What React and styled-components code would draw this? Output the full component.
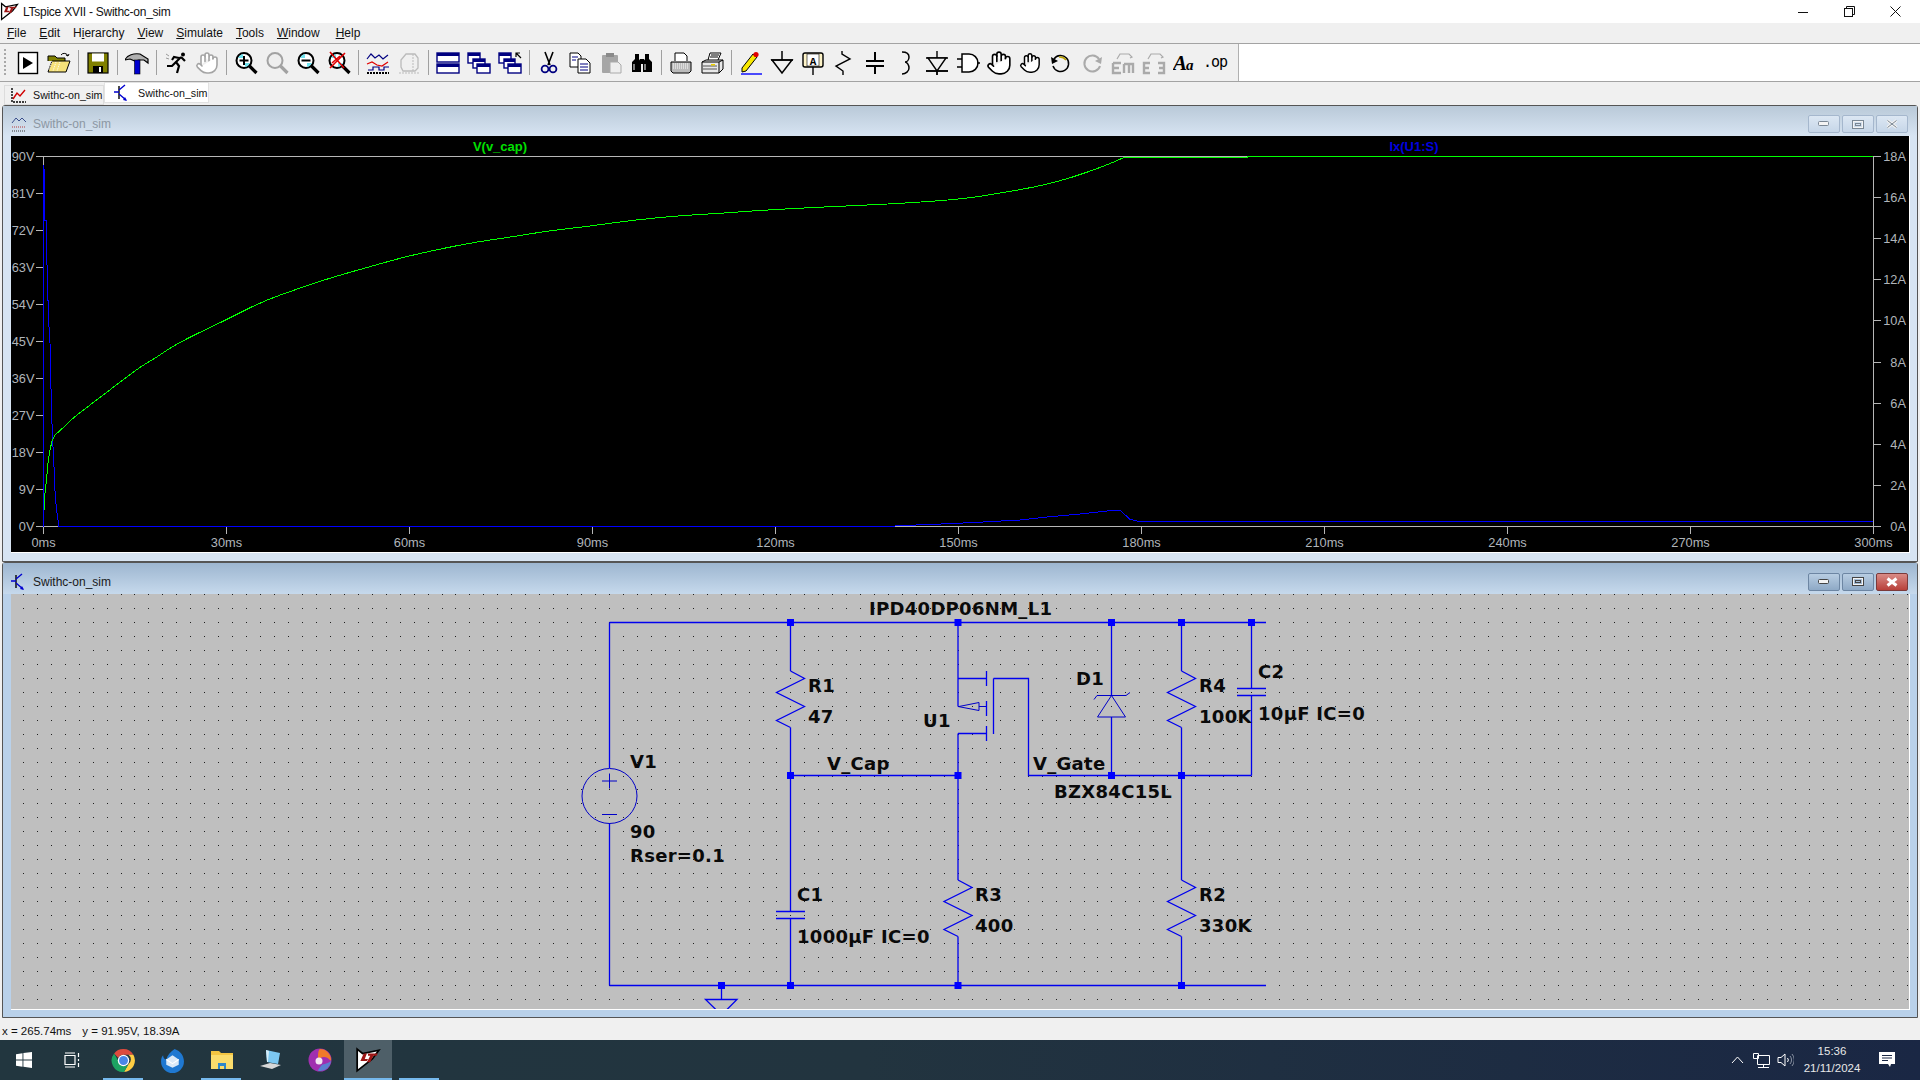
import React from "react";
import styled, { createGlobalStyle } from "styled-components";
import { Hand } from "lucide-react";

const menus = [
  ["F", "ile"],
  ["E", "dit"],
  ["H", "", "i", "erarchy"],
  ["V", "iew"],
  ["S", "imulate"],
  ["T", "ools"],
  ["W", "indow"],
  ["H", "elp"],
];

const greenHead = [
  [44, 510], [44.3, 500], [46.7, 477], [48.3, 460], [50, 450], [52.3, 440], [55, 435],
];

const greenBody = [
  [63, 428], [73, 418], [90, 405], [107, 392], [123, 380], [140, 367], [157, 357], [170, 348], [190, 337],
  [226, 320], [261, 302], [297, 289], [333, 277], [369, 267], [404, 257], [440, 249], [476, 242],
  [511, 237], [547, 231], [583, 227], [619, 222], [654, 218], [690, 215], [726, 213], [750, 211],
  [821, 207], [893, 204], [964, 199], [1000, 193], [1036, 187], [1071, 178], [1107, 165], [1124, 157.5],
];

const greenTail = [[1247, 157.5], [1248, 156.5], [1873, 156.5]];

const blueTrace = [
  [43.5, 526.5], [43.5, 165], [44.7, 175], [45, 220], [46.3, 220], [46.7, 253], [47.7, 290], [48.7, 322],
  [50, 343], [50.7, 375], [51.7, 417], [52.7, 440], [54, 467], [55.3, 498], [57, 513], [59, 526.5],
  [895, 526], [927, 524.5], [950, 523.7], [983, 522], [1020, 520], [1047, 517], [1080, 514], [1110, 510.7],
  [1120, 510.3], [1130, 519.3], [1137, 521], [1873, 521.3],
];

const toPoints = (list) => list.map((p) => p.join(",")).join(" ");

const greenPath = () => {
  let d = "M" + greenHead.map((p) => p.join(" ")).join("L");
  greenBody.forEach((p, i) => {
    const next = greenBody[i + 1];
    if (next) {
      d += `Q${p[0]} ${p[1]} ${(p[0] + next[0]) / 2} ${(p[1] + next[1]) / 2}`;
    } else {
      d += `L${p[0]} ${p[1]}`;
    }
  });
  return d + "L" + greenTail.map((p) => p.join(" ")).join("L");
};

// grid of the schematic, same pitch as the wires
const gridDots = () => {
  const pitch = 13.957;
  let d = "";
  for (let r = -2; r < 29; r++) {
    for (let c = -43; c < 94; c++) {
      const x = Math.floor(609.5 + c * pitch);
      const y = Math.floor(622.5 + r * pitch);
      d += `M${x} ${y}h1v1h-1z`;
    }
  }
  return d;
};

const resistor = (x, y) =>
  `M${x} ${y}l14 7.5l-28 14l28 14l-28 14l14 7`;

const GlobalStyle = createGlobalStyle`
  html, body { margin: 0; padding: 0; background: #f0f0f0; }
  body { font-family: "Liberation Sans", Arial, sans-serif; overflow: hidden; }
`;

const Page = styled.div`
  width: 1920px;
  height: 1080px;
  display: flex;
  flex-direction: column;
  overflow: hidden;
`;

const TitleBar = styled.div`
  height: 23px;
  background: #fff;
  display: flex;
  align-items: center;
  font-size: 12px;
  letter-spacing: -0.25px;
  color: #111;
`;

const AppIcon = styled.div`
  width: 23px;
  height: 23px;
  display: flex;
  align-items: center;
`;

const CaptionGroup = styled.div`
  margin-left: auto;
  display: flex;
  padding-right: 2px;
`;

const CaptionButton = styled.div`
  width: 46px;
  height: 23px;
  display: flex;
  align-items: center;
  justify-content: center;
`;

const MenuBar = styled.div`
  height: 20px;
  background: #f0f0f0;
  border-bottom: 1px solid #a3a3a3;
  display: flex;
  align-items: center;
  gap: 13px;
  padding-left: 7px;
  font-size: 12px;
  color: #111;
  & > span:last-child {
    margin-left: 3px;
  }
`;

const ToolRow = styled.div`
  height: 37px;
  background: #fff;
  border-bottom: 1px solid #a3a3a3;
  display: flex;
`;

const Toolbar = styled.div`
  width: 1239px;
  box-sizing: border-box;
  background: #f0f0f0;
  border-right: 1px solid #b0b0b0;
  display: flex;
  align-items: center;
`;

const Grip = styled.div`
  width: 2px;
  height: 28px;
  margin: 0 6px 0 4px;
  background: repeating-linear-gradient(to bottom, #a8a8a8 0 2px, transparent 2px 4px);
`;

const ToolButton = styled.div`
  width: 31px;
  height: 30px;
  display: flex;
  align-items: center;
  justify-content: center;
  flex: none;
`;

const ToolSep = styled.div`
  width: 1px;
  height: 25px;
  margin: 0 3.5px;
  background: #a0a0a0;
  flex: none;
`;

const TabStrip = styled.div`
  height: 23px;
  background: #f0f0f0;
  display: flex;
  align-items: flex-start;
  padding-left: 4px;
  font-size: 10.7px;
  color: #111;
  white-space: nowrap;
`;

const Tab = styled.div`
  width: ${(p) => (p.$active ? "105px" : "100px")};
  height: ${(p) => (p.$active ? "21px" : "20px")};
  margin-top: ${(p) => (p.$active ? "0" : "3px")};
  box-sizing: border-box;
  background: ${(p) => (p.$active ? "#fff" : "#f0f0f0")};
  border: 1px solid ${(p) => (p.$active ? "#e2e2e2" : "#dcdcdc")};
  display: flex;
  align-items: center;
  gap: ${(p) => (p.$active ? "8px" : "6px")};
  padding-left: ${(p) => (p.$active ? "9px" : "5px")};
`;

const Mdi = styled.div`
  flex: 1;
  display: flex;
  flex-direction: column;
  padding: 0 2px;
  background: #f0f0f0;
`;

const ChildWindow = styled.div`
  height: ${(p) => (p.$active ? "456px" : "457px")};
  box-sizing: border-box;
  flex: none;
  display: flex;
  flex-direction: column;
  border: 1px solid #555;
  border-radius: 3px 3px 0 0;
  background: ${(p) => (p.$active ? "#b9d1ea" : "#d7e4f2")};
`;

const ChildHeader = styled.div`
  height: ${(p) => (p.$active ? "31px" : "30px")};
  box-sizing: border-box;
  flex: none;
  display: flex;
  align-items: center;
  gap: 6px;
  padding: 6px 9px 0 8px;
  font-size: 12px;
  color: ${(p) => (p.$active ? "#1a1a1a" : "#8c97a3")};
  background: linear-gradient(
    to bottom,
    ${(p) => (p.$active ? "#9db6d0, #c6d9ec" : "#b9c9d8, #d7e4f2")}
  );
`;

const WinButtons = styled.div`
  margin-left: auto;
  display: flex;
  gap: 2px;
`;

const WinButton = styled.div`
  width: 32px;
  height: 18px;
  box-sizing: border-box;
  border: 1px solid #9fb0c6;
  border-radius: 2px;
  display: flex;
  align-items: center;
  justify-content: center;
  background: ${(p) =>
    p.$close
      ? "linear-gradient(to bottom, #d98b86, #b8403a)"
      : p.$active
      ? "linear-gradient(to bottom, #b8cde2, #8ea9c6)"
      : "linear-gradient(to bottom, #dce7f3, #c6d6e8)"};
  border-color: ${(p) => (p.$close ? "#7b3a3a" : p.$active ? "#6d86a3" : "#a5b7cd")};
`;

const PlotFrame = styled.div`
  flex: 1;
  margin: 0 7px 8px 8px;
  border-right: 1px solid #fff;
  border-bottom: 1px solid #fff;
  background: #000;
  display: flex;
`;

const SheetFrame = styled(PlotFrame)`
  background: #bfbfbf;
  margin-bottom: 7px;
`;

const Drawing = styled.svg`
  display: block;
  width: 100%;
  height: 100%;
`;

const AxisLabel = styled.text`
  font: 12.8px "Liberation Sans", Arial, sans-serif;
  fill: #b0b5bb;
  text-anchor: ${(p) => p.$anchor || "end"};
`;

const TraceLabel = styled.text`
  font: bold 13px "Liberation Sans", Arial, sans-serif;
  fill: ${(p) => p.$color};
  text-anchor: middle;
`;

const SchLabel = styled.text`
  font: bold 18px "DejaVu Sans", Verdana, sans-serif;
  letter-spacing: 0.3px;
  fill: #0a0a0a;
`;

const StatusBar = styled.div`
  height: 18px;
  margin-top: 4px;
  background: #f0f0f0;
  display: flex;
  align-items: center;
  gap: 11px;
  padding-left: 2px;
  font-size: 11.5px;
  color: #111;
`;

const Taskbar = styled.div`
  height: 40px;
  display: flex;
  background: linear-gradient(to right, #22363f, #22343f 45%, #1a2744);
`;

const TaskTile = styled.div`
  position: relative;
  width: ${(p) => (p.$wide ? "48px" : "49px")};
  height: 40px;
  flex: none;
  display: flex;
  align-items: center;
  justify-content: center;
  background: ${(p) => (p.$current ? "#4e5f68" : "transparent")};
  &::after {
    content: "";
    display: ${(p) => (p.$running ? "block" : "none")};
    position: absolute;
    bottom: 0;
    left: ${(p) => (p.$current ? "0" : "4px")};
    right: ${(p) => (p.$current ? "0" : "5px")};
    height: 2px;
    background: #76b9ed;
  }
`;

const TaskGap = styled.div`
  width: 3px;
`;

const Tray = styled.div`
  margin-left: auto;
  display: flex;
  align-items: center;
  color: #e8e8e8;
`;

const TrayIcon = styled.div`
  width: 24px;
  display: flex;
  justify-content: center;
`;

const Clock = styled.div`
  width: 70px;
  margin-right: 9px;
  text-align: center;
  font-size: 11.5px;
  line-height: 17px;
`;

const NotifyBox = styled.div`
  width: 44px;
  padding-right: 22px;
  box-sizing: border-box;
  display: flex;
  justify-content: center;
`;

const Ico = ({ children, size = 24 }) => (
  <svg width={size} height={size} viewBox="0 0 24 24" fill="none">
    {children}
  </svg>
);

const Mag = ({ grey, children }) => {
  const c = grey ? "#a2a2a2" : "#000";
  return (
    <Ico>
      <circle cx="10" cy="9.5" r="7.5" fill={grey ? "#eee" : "#fff"} stroke={c} strokeWidth="2" />
      {!grey && <path d="M4 7a7 7 0 0 1 5-4v4zM16 12a7 7 0 0 1-5 4v-4z" fill="#6fe3ef" />}
      <path d="M15.5 15l7 7" stroke={c} strokeWidth="3.2" />
      {children}
    </Ico>
  );
};

const WindowTile = ({ x, y, w, h }) => (
  <g>
    <rect x={x} y={y} width={w} height={h} fill="#fff" stroke="#000080" strokeWidth="1.4" />
    <rect x={x} y={y} width={w} height="3" fill="#000080" />
  </g>
);

const PlotGlyph = ({ grey }) =>
  grey ? (
    <Ico>
      <path d="M4 9l5-6h9l3 4v10l-3 3H6l-2-4z" stroke="#bbb" strokeWidth="1.3" />
      <path d="M16 3v17M2 22h21" stroke="#bbb" strokeDasharray="2 1" />
    </Ico>
  ) : (
    <Ico>
      <path d="M1 8l4-5 4 4 4-3 4 4 5-4" stroke="#000080" strokeWidth="1.2" />
      <path d="M1 13l5-2 5 3 5 1 6-4" stroke="#e00000" strokeWidth="1.2" />
      <path d="M2 19h5v-3h6v3h5v-3h5" stroke="#000080" strokeWidth="1.2" />
      <path d="M1 22h22" stroke="#000" strokeDasharray="2 1" strokeWidth="2" />
    </Ico>
  );

const HandGlyph = ({ color, size = 24, weight = 2 }) => (
  <Hand size={size} color={color} fill="#fff" strokeWidth={weight} />
);

const tools = [
  <Ico key="run">
    <rect x="2.5" y="1.5" width="19" height="21" fill="#fff" stroke="#000" strokeWidth="1.4" />
    <path d="M7 6l10 6-10 6z" fill="#000" />
  </Ico>,
  <Ico key="open">
    <path d="M1 10V5h7l2 2h8v3" fill="#808000" stroke="#000" />
    <path d="M1 21l4-11h18l-4 11z" fill="#f6e27a" stroke="#000" />
    <path d="M5 10l-3 9M9 11l-3 9M13 11l-3 9" stroke="#fff" strokeDasharray="1 1" />
    <path d="M14 4a4 4 0 0 1 7 1l-2-1M21 5l1-2" stroke="#000" />
  </Ico>,
  "sep",
  <Ico key="save">
    <rect x="2" y="2" width="20" height="20" fill="#808000" stroke="#000" strokeWidth="1.2" />
    <rect x="6" y="2.5" width="12" height="8" fill="#fff" />
    <rect x="7" y="15" width="10" height="7" fill="#000" />
    <rect x="13" y="16" width="2" height="5" fill="#fff" />
  </Ico>,
  "sep",
  <Ico key="build">
    <path d="M0 9c2-5 9-7 15-6l8 5v4l-4-3h-5l-4 1-5-2z" fill="#b0b0b0" stroke="#000" strokeWidth="1.2" />
    <rect x="9.5" y="9" width="5.5" height="14" fill="#0000d0" stroke="#000" strokeWidth="0.6" />
  </Ico>,
  "sep",
  <Ico key="runner">
    <circle cx="19" cy="3.5" r="2" fill="#000" />
    <path d="M17 6l-5 5 3 4-2 7M12 11l-4 4H3M17 6l4 4M15 7l-5-1-2 3" stroke="#000" strokeWidth="2.2" />
    <path d="M2 3l3 2M2 7l3 1" stroke="#999" />
  </Ico>,
  <HandGlyph key="halt" color="#a4a4a4" weight={1.6} />,
  "sep",
  <Mag key="zin">
    <path d="M10 5v9M5.5 9.5h9" stroke="#000" strokeWidth="2" />
  </Mag>,
  <Mag key="zgrey" grey />,
  <Mag key="zout">
    <path d="M5.5 9.5h9" stroke="#000" strokeWidth="2" />
  </Mag>,
  <Mag key="zfit">
    <path d="M3 1l14 16M18 2L3 17M5 12l8-7" stroke="#e00000" strokeWidth="1.6" />
  </Mag>,
  "sep",
  <PlotGlyph key="plot" />,
  <PlotGlyph key="plotgrey" grey />,
  "sep",
  <Ico key="tile">
    <WindowTile x={1} y={2} w={22} h={9} />
    <WindowTile x={1} y={13} w={22} h={9} />
  </Ico>,
  <Ico key="cascade">
    <WindowTile x={1} y={2} w={12} h={10} />
    <WindowTile x={6} y={8} w={12} h={9} />
    <WindowTile x={10} y={13} w={13} h={9} />
  </Ico>,
  <Ico key="cascade2">
    <WindowTile x={1} y={2} w={12} h={10} />
    <WindowTile x={6} y={8} w={11} h={9} />
    <WindowTile x={10} y={13} w={13} h={9} />
    <path d="M18 6V2h4M18 2l5 5" stroke="#000" strokeWidth="1.2" />
  </Ico>,
  "sep",
  <Ico key="cut">
    <path d="M8 1l5 13M16 1l-5 13" stroke="#000" strokeWidth="1.6" />
    <circle cx="8" cy="18" r="3.4" stroke="#000080" strokeWidth="1.8" />
    <circle cx="16" cy="18" r="3.4" stroke="#000080" strokeWidth="1.8" />
  </Ico>,
  <Ico key="copy">
    <path d="M2 2h8l3 3v11H2z" fill="#fff" stroke="#000" />
    <path d="M10 8h8l4 4v10H10z" fill="#fff" stroke="#000" />
    <path d="M4 6h6M4 9h4M12 13h8M12 16h8M12 19h8" stroke="#000080" />
  </Ico>,
  <Ico key="paste">
    <rect x="3" y="4" width="16" height="18" rx="1" fill="#a6a6a6" />
    <rect x="7" y="2" width="8" height="4" fill="#8a8a8a" />
    <path d="M11 11h8l3 3v8H11z" fill="#eee" stroke="#aaa" />
  </Ico>,
  <Ico key="find">
    <path d="M5 3h4v5l2 3v10H2V11l3-3zM15 3h4v5l3 3v10h-9V11l2-3z" fill="#000" />
    <path d="M4 13v6M15 13v6" stroke="#fff" />
    <rect x="10" y="8" width="4" height="5" fill="#000" />
  </Ico>,
  "sep",
  <Ico key="print">
    <path d="M6 10V2h9l3 3v5" fill="#fff" stroke="#000" />
    <path d="M2 11h20v9l-2 2H4l-2-2z" fill="#bbb" stroke="#000" />
    <path d="M4 13h16M4 15h16M4 17h16" stroke="#fff" strokeDasharray="1 1" />
  </Ico>,
  <Ico key="print2">
    <path d="M8 9l2-7h11l-3 7" fill="#fff" stroke="#000" />
    <path d="M11 4h8M10 6h8" stroke="#000" />
    <path d="M2 11l4-2h17v9l-4 4H2z" fill="#e8e8e8" stroke="#000" />
    <path d="M2 11h17v11M19 11l4-2" stroke="#000" />
    <path d="M3 15h14M3 18h14" stroke="#555" />
    <rect x="11" y="13" width="4" height="1.5" fill="#ecd000" />
  </Ico>,
  "sep",
  <Ico key="wire">
    <path d="M3 17L14 3l4 3L7 20l-4 1z" fill="#f8e800" stroke="#000" />
    <circle cx="17" cy="3.5" r="2.6" fill="#e00000" />
    <path d="M2 23h21" stroke="#0000ff" strokeWidth="1.4" />
  </Ico>,
  <Ico key="gnd">
    <path d="M12 0v9M1 9h22" stroke="#000" strokeWidth="1.5" />
    <path d="M2 9h20L12 22z" stroke="#000" strokeWidth="1.5" />
  </Ico>,
  <Ico key="label">
    <rect x="2" y="2" width="20" height="14" rx="2" fill="#fdf3c8" stroke="#000" strokeWidth="1.4" />
    <rect x="6" y="3" width="12" height="12" fill="#fff" stroke="#000" strokeWidth="0.6" />
    <text x="12" y="13.5" textAnchor="middle" fontSize="11" fontWeight="bold" fontFamily="Liberation Mono" fill="#000">
      A
    </text>
    <path d="M12 16v8" stroke="#000" strokeWidth="1.4" />
  </Ico>,
  <Ico key="res">
    <path d="M10 0v3l8 5-14 7 7 5v4" stroke="#000" strokeWidth="1.4" />
  </Ico>,
  <Ico key="cap">
    <path d="M12 1v9M12 15v8M3 10h18M3 15h18" stroke="#000" strokeWidth="2" />
  </Ico>,
  <Ico key="ind">
    <path d="M8 1c5 0 7 2 7 5s-2 5-4 5c2 0 4 3 4 6s-3 6-7 6" stroke="#000" strokeWidth="1.5" />
  </Ico>,
  <Ico key="diode">
    <path d="M12 0v24M1 7h22M1 20h22" stroke="#000" strokeWidth="1.4" />
    <path d="M3 7h18l-9 13z" fill="#f0f0f0" stroke="#000" strokeWidth="1.4" />
    <path d="M1 20h22M12 20v4" stroke="#000" strokeWidth="1.4" />
  </Ico>,
  <Ico key="gate">
    <path d="M6 3h7a9 9 0 0 1 0 18H6z" fill="#fff" stroke="#000" strokeWidth="1.5" />
    <path d="M1 8h5M1 16h5M21 12h3" stroke="#000" strokeWidth="1.5" />
  </Ico>,
  <HandGlyph key="move" color="#000" size={26} weight={1.5} />,
  <HandGlyph key="drag" color="#000" size={22} weight={1.6} />,
  <Ico key="undo">
    <path d="M5 8a8 8 0 1 1-1 7" stroke="#000" strokeWidth="1.5" />
    <path d="M10 6a8 8 0 0 1 7 3" stroke="#b8a000" strokeWidth="1.5" />
    <path d="M2 6l1 7 6-3z" fill="#000" />
  </Ico>,
  <Ico key="redo">
    <path d="M19 8a8 8 0 1 0 1 7" stroke="#aaa" strokeWidth="2" />
    <path d="M22 6l-1 7-6-3z" fill="#aaa" />
  </Ico>,
  <Ico key="rotate">
    <path d="M2 12h8M2 12v10h8M2 17h6M13 13v9M18 13v9M13 13h9v9" stroke="#aaa" strokeWidth="2.4" />
    <path d="M6 8l3-5h9l3 3-2 1" stroke="#aaa" strokeWidth="1.2" />
  </Ico>,
  <Ico key="mirror">
    <path d="M8 12H2v10h6M2 17h5M16 12h6v10h-6M22 17h-5" stroke="#aaa" strokeWidth="2.4" />
    <path d="M6 8l3-5h9l3 3-2 1" stroke="#aaa" strokeWidth="1.2" />
  </Ico>,
  <Ico key="text">
    <text x="0" y="19" fontFamily="Liberation Serif" fontStyle="italic" fontWeight="bold" fontSize="21" fill="#000">
      A
    </text>
    <text x="13" y="19" fontFamily="Liberation Serif" fontStyle="italic" fontWeight="bold" fontSize="15" fill="#000">
      a
    </text>
  </Ico>,
  <Ico key="op">
    <text x="-1" y="16" fontFamily="DejaVu Sans Mono" fontSize="15" letterSpacing="-1" fill="#000">
      .op
    </text>
  </Ico>,
];

const LtLogo = ({ size = 18 }) => (
  <svg width={size} height={size} viewBox="0 0 24 24" fill="none">
    <path d="M2 2l5 4 15-3-6 8-14 11z" fill="#fff" stroke="#000" strokeWidth="1.6" />
    <path d="M5 13l3-7h3l-2 5h3l-1 2zM12 6h9l-1 2h-3l-3 6h-3l3-6h-2z" fill="#9c1616" />
  </svg>
);

const ScopeGlyph = () => (
  <svg width="16" height="16" viewBox="0 0 16 16" fill="none">
    <path d="M1 7l4-5 3 3 3-3 4 4" stroke="#3b4f8c" />
    <path d="M1 11h14" stroke="#b43b3b" strokeDasharray="1 1" />
    <path d="M1 15h14" stroke="#333" strokeDasharray="1 1" />
  </svg>
);

const PlotTabGlyph = () => (
  <svg width="17" height="17" viewBox="0 0 17 17" fill="none">
    <path d="M2 1v14h14" stroke="#000" strokeDasharray="2 1" strokeWidth="1.4" />
    <path d="M3 12l4-6 3 3 5-6" stroke="#d00000" strokeWidth="1.4" />
  </svg>
);

const TransistorGlyph = () => (
  <svg width="16" height="18" viewBox="0 0 16 18" fill="none">
    <path d="M5 2v13" stroke="#000" strokeWidth="1.4" />
    <path d="M11 1L5 6M0 8h5M5 10l7 6" stroke="#0000d0" strokeWidth="1.4" />
    <path d="M13 17l-4-1 2-3z" fill="#0000d0" />
  </svg>
);

const MinGlyph = ({ active }) => (
  <svg width="12" height="6">
    <rect x="0.5" y="0.5" width="10" height="4" rx="1" fill="#f4f4f4" stroke={active ? "#444" : "#7a8794"} />
  </svg>
);

const MaxGlyph = ({ active }) => (
  <svg width="12" height="9">
    <rect x="1" y="1" width="10" height="7" fill="none" stroke="#f4f4f4" strokeWidth="2" />
    <rect x="0.5" y="0.5" width="11" height="8" fill="none" stroke={active ? "#444" : "#7a8794"} />
    <rect x="3.5" y="3.5" width="5" height="2" fill="none" stroke={active ? "#444" : "#7a8794"} />
  </svg>
);

const CloseGlyph = ({ active }) => (
  <svg width="12" height="10">
    <path d="M1.5 1.5l9 7M10.5 1.5l-9 7" stroke={active ? "#fff" : "#f0f0f0"} strokeWidth="3" />
    {!active && <path d="M1.5 1.5l9 7M10.5 1.5l-9 7" stroke="#7a8794" strokeWidth="1" />}
  </svg>
);

const ChildControls = ({ active }) => (
  <WinButtons>
    <WinButton $active={active}>
      <MinGlyph active={active} />
    </WinButton>
    <WinButton $active={active}>
      <MaxGlyph active={active} />
    </WinButton>
    <WinButton $active={active} $close={active}>
      <CloseGlyph active={active} />
    </WinButton>
  </WinButtons>
);

function PlotPane() {
  const volts = Array.from({ length: 11 }, (_, i) => 90 - i * 9);
  const amps = Array.from({ length: 10 }, (_, i) => 18 - i * 2);
  const times = Array.from({ length: 11 }, (_, i) => i * 30);
  return (
    <Drawing viewBox="11 136 1898 416" preserveAspectRatio="none">
      <g stroke="#b6b6b6" fill="none" shapeRendering="crispEdges">
        <rect x="43.5" y="156.5" width="1830" height="370" />
        {volts.map((v, i) => (
          <path key={v} d={`M36 ${Math.floor(156.5 + i * 37) + 0.5}h7`} />
        ))}
        {amps.map((a, i) => (
          <path key={a} d={`M1874 ${Math.floor(156.5 + i * 41.11) + 0.5}h7`} />
        ))}
        {times.map((t, i) => (
          <path key={t} d={`M${43.5 + i * 183} 527v7`} />
        ))}
      </g>
      {volts.map((v, i) => (
        <AxisLabel key={v} x="34.5" y={161 + i * 37}>
          {v}V
        </AxisLabel>
      ))}
      {amps.map((a, i) => (
        <AxisLabel key={a} x="1906" y={161 + i * 41.11}>
          {a}A
        </AxisLabel>
      ))}
      {times.map((t, i) => (
        <AxisLabel key={t} $anchor="middle" x={43.5 + i * 183} y="546.5">
          {t}ms
        </AxisLabel>
      ))}
      <TraceLabel $color="#00e000" x="500" y="150.5">
        V(v_cap)
      </TraceLabel>
      <TraceLabel $color="#0000e0" x="1414" y="150.5">
        Ix(U1:S)
      </TraceLabel>
      <polyline points={toPoints(blueTrace)} stroke="#0000ff" strokeWidth="1" fill="none" shapeRendering="crispEdges" />
      <path d={greenPath()} stroke="#00ff00" strokeWidth="1" fill="none" shapeRendering="crispEdges" />
    </Drawing>
  );
}

const junctions = [
  [790.5, 622.5], [958, 622.5], [1111.5, 622.5], [1181.5, 622.5], [1251.5, 622.5],
  [790.5, 775.5], [958, 775.5], [1111.5, 775.5], [1181.5, 775.5],
  [721.5, 985.5], [790.5, 985.5], [958, 985.5], [1181.5, 985.5],
];

const labels = [
  ["IPD40DP06NM_L1", 869, 615],
  ["R1", 808, 692],
  ["47", 808, 723],
  ["U1", 923, 727],
  ["V1", 630, 768],
  ["V_Cap", 827, 770],
  ["90", 630, 838],
  ["Rser=0.1", 630, 862],
  ["C1", 797, 901],
  ["1000µF IC=0", 797, 943],
  ["D1", 1076, 685],
  ["R4", 1199, 692],
  ["100K", 1199, 723],
  ["C2", 1258, 678],
  ["10µF IC=0", 1258, 720],
  ["V_Gate", 1033, 770],
  ["BZX84C15L", 1054, 798],
  ["R3", 975, 901],
  ["400", 975, 932],
  ["R2", 1199, 901],
  ["330K", 1199, 932],
];

function Schematic() {
  const wires = [
    "M609.5 622.5H1266M609.5 985.5H1266M609.5 622.5V768M609.5 823V985.5",
    "M790.5 622.5V671M790.5 727.5V911.5M790.5 918.5V985.5M776 911.5h29M776 918.5h29",
    "M790.5 775.5H958M958 622.5V706.5M958 678.5H986M958 733.5H986M958 733.5V880M958 936.5V985.5",
    "M986.5 671v15M986.5 701v15M986.5 726v15M993.5 678.5V734M993.5 678.5H1028.5V775.5H1251.5",
    "M1111.5 622.5V695.5M1111.5 717V775.5",
    "M1181.5 622.5V671M1181.5 727.5V880M1181.5 936.5V985.5",
    "M1251.5 622.5V688.5M1251.5 695.5V775.5M1237 688.5h29M1237 695.5h29",
    resistor(790.5, 671),
    resistor(958, 880),
    resistor(1181.5, 671),
    resistor(1181.5, 880),
    "M721.5 985.5V999.5M705.5 999.5H737L721.5 1015Z",
  ];
  return (
    <Drawing viewBox="11 594 1898 415" preserveAspectRatio="none">
      <path d={gridDots()} fill="#202020" />
      {wires.map((d, i) => (
        <path key={i} d={d} stroke="#0000ee" strokeWidth="1.3" fill="none" />
      ))}
      <g stroke="#0000c8" fill="none">
        <circle cx="609.5" cy="796" r="27.5" />
        <path d="M602 781h15M609.5 773.5v15M602 814.5h15" />
        <path d="M958 706.5h1l20 -4v8z" />
        <path d="M979 706.5h7" />
        <path d="M1094 699.5l3 -4h29l4 -3" />
        <path d="M1111.5 695.5l-14 21.5h28z" />
      </g>
      {junctions.map(([x, y]) => (
        <rect key={`${x}-${y}`} x={x - 3.5} y={y - 3.5} width="7" height="7" fill="#0000ff" />
      ))}
      {labels.map(([text, x, y]) => (
        <SchLabel key={text} x={x} y={y}>
          {text}
        </SchLabel>
      ))}
    </Drawing>
  );
}

export default function App() {
  return (
    <Page>
      <GlobalStyle />
      <TitleBar>
        <AppIcon>
          <LtLogo size={19} />
        </AppIcon>
        LTspice XVII - Swithc-on_sim
        <CaptionGroup>
          <CaptionButton>
            <svg width="10" height="10">
              <path d="M0 5.5h10" stroke="#111" />
            </svg>
          </CaptionButton>
          <CaptionButton>
            <svg width="11" height="11" fill="none" stroke="#111">
              <path d="M2.5 2.5v-2h8v8h-2" />
              <rect x="0.5" y="2.5" width="8" height="8" />
            </svg>
          </CaptionButton>
          <CaptionButton>
            <svg width="11" height="11" stroke="#111">
              <path d="M0.5 0.5l10 10M10.5 0.5l-10 10" />
            </svg>
          </CaptionButton>
        </CaptionGroup>
      </TitleBar>

      <MenuBar>
        {menus.map((m, i) => (
          <span key={i}>
            {m.length === 2 ? (
              <>
                <u>{m[0]}</u>
                {m[1]}
              </>
            ) : (
              <>
                {m[0]}
                <u>{m[2]}</u>
                {m[3]}
              </>
            )}
          </span>
        ))}
      </MenuBar>

      <ToolRow>
        <Toolbar>
          <Grip />
          {tools.map((t, i) =>
            t === "sep" ? <ToolSep key={i} /> : <ToolButton key={i}>{t}</ToolButton>
          )}
        </Toolbar>
      </ToolRow>

      <TabStrip>
        <Tab>
          <PlotTabGlyph />
          Swithc-on_sim
        </Tab>
        <Tab $active>
          <TransistorGlyph />
          Swithc-on_sim
        </Tab>
      </TabStrip>

      <Mdi>
        <ChildWindow>
          <ChildHeader>
            <ScopeGlyph />
            Swithc-on_sim
            <ChildControls />
          </ChildHeader>
          <PlotFrame>
            <PlotPane />
          </PlotFrame>
        </ChildWindow>
        <ChildWindow $active>
          <ChildHeader $active>
            <TransistorGlyph />
            Swithc-on_sim
            <ChildControls active />
          </ChildHeader>
          <SheetFrame>
            <Schematic />
          </SheetFrame>
        </ChildWindow>
      </Mdi>

      <StatusBar>
        <span>x = 265.74ms</span>
        <span>y = 91.95V, 18.39A</span>
      </StatusBar>

      <Taskbar>
        <TaskTile $wide>
          <svg width="16" height="16" viewBox="0 0 16 16" fill="#fff">
            <path d="M0 2.3l6.5-1v6.3H0zM7.4 1.1L16 0v7.6H7.4zM0 8.4h6.5v6.3l-6.5-1zM7.4 8.4H16V16l-8.6-1.2z" />
          </svg>
        </TaskTile>
        <TaskTile $wide>
          <svg width="17" height="16" viewBox="0 0 17 16" fill="none" stroke="#fff" strokeWidth="1.2">
            <path d="M1 3.5h10v9H1zM1 1h10M1 15h10M14.5 1v4M14.5 7v2M14.5 11v4" />
          </svg>
        </TaskTile>
        <TaskGap />
        <TaskTile $running>
          <svg width="25" height="25" viewBox="0 0 24 24">
            <path d="M12 1a11 11 0 0 1 9.5 5.5H12a5.5 5.5 0 0 0-5 3.2L3 5.2A11 11 0 0 1 12 1z" fill="#dd4b3e" />
            <path d="M21.5 6.5A11 11 0 0 1 12.5 23l4.2-7.5a5.5 5.5 0 0 0 .1-9z" fill="#ffce43" />
            <path d="M12.5 23A11 11 0 0 1 3 5.2l4.2 7.5a5.5 5.5 0 0 0 9.5 2.8z" fill="#1da362" />
            <circle cx="12" cy="12" r="5.5" fill="#fff" />
            <circle cx="12" cy="12" r="4.3" fill="#4a86e8" />
          </svg>
        </TaskTile>
        <TaskTile>
          <svg width="25" height="25" viewBox="0 0 24 24">
            <path d="M14 1c6 2 9 7 9 12a11 11 0 0 1-22 0c0-3 1-5 2-6 0 3 2 4 3 4 1-4 4-7 8-10z" fill="#1f78d1" />
            <path d="M6 11l6-4 6 4v5l-6 3-6-3z" fill="#dbe9f7" />
            <path d="M6 11l6 4 6-4" stroke="#fff" fill="none" />
          </svg>
        </TaskTile>
        <TaskTile $running>
          <svg width="22" height="22" viewBox="0 0 22 22">
            <path d="M0 2h8l2 2h12v16H0z" fill="#f4c542" />
            <path d="M0 6h22v14H0z" fill="#fbdc6c" />
            <path d="M7 14h8v6h-2v-3H9v3H7z" fill="#2f87c9" />
          </svg>
        </TaskTile>
        <TaskTile>
          <svg width="24" height="24" viewBox="0 0 24 24">
            <path d="M7 2l14 3-2 11-11-2z" fill="#7cc8f2" />
            <path d="M7 2l3 1-1 11H8z" fill="#d6eefa" />
            <path d="M1 18l10-3 11 2-9 4z" fill="#d8d8d8" />
          </svg>
        </TaskTile>
        <TaskTile>
          <svg width="24" height="24" viewBox="0 0 24 24" fill="none">
            <circle cx="12" cy="12" r="11.5" fill="#a02fb0" />
            <path d="M12 1a11 11 0 0 1 11 11c0 2-3-4-8-3-3 .5-3 3-5 2 0-4 0-9 2-10z" fill="#f07a2a" />
            <path d="M23 13a11 11 0 0 1-11 10c-4 0-1-2 1-5 2-3 5-1 10-5z" fill="#5a7fd0" />
            <circle cx="11" cy="13" r="3.5" fill="#f2e6f2" />
          </svg>
        </TaskTile>
        <TaskTile $wide $current $running>
          <LtLogo size={26} />
        </TaskTile>
        <TaskGap />
        <TaskTile $running />
        <Tray>
          <TrayIcon>
            <svg width="13" height="8" fill="none" stroke="#fff">
              <path d="M1 7l5.5-6 5.5 6" />
            </svg>
          </TrayIcon>
          <TrayIcon>
            <svg width="17" height="15" fill="none" stroke="#fff">
              <path d="M4.5 2.5h12v9h-12zM10.5 11.5v3M5 14.5h11M0.5 0.5h5v5h-5z" />
            </svg>
          </TrayIcon>
          <TrayIcon>
            <svg width="17" height="14" fill="none" stroke="#fff">
              <path d="M1 4.5h3l4-3.5v12L4 9.5H1z" />
              <path d="M10.5 5a3 3 0 0 1 0 4" />
              <path d="M13 3a6 6 0 0 1 0 8M15 1a9 9 0 0 1 0 12" stroke="#8a93a3" />
            </svg>
          </TrayIcon>
          <Clock>
            15:36
            <br />
            21/11/2024
          </Clock>
          <NotifyBox>
            <svg width="16" height="16" viewBox="0 0 16 16">
              <path d="M0 0h16v12h-4l-1 3-2-3H0z" fill="#fff" />
              <path d="M3 3.5h10M3 6h10M3 8.5h6" stroke="#1a2744" />
            </svg>
          </NotifyBox>
        </Tray>
      </Taskbar>
    </Page>
  );
}
